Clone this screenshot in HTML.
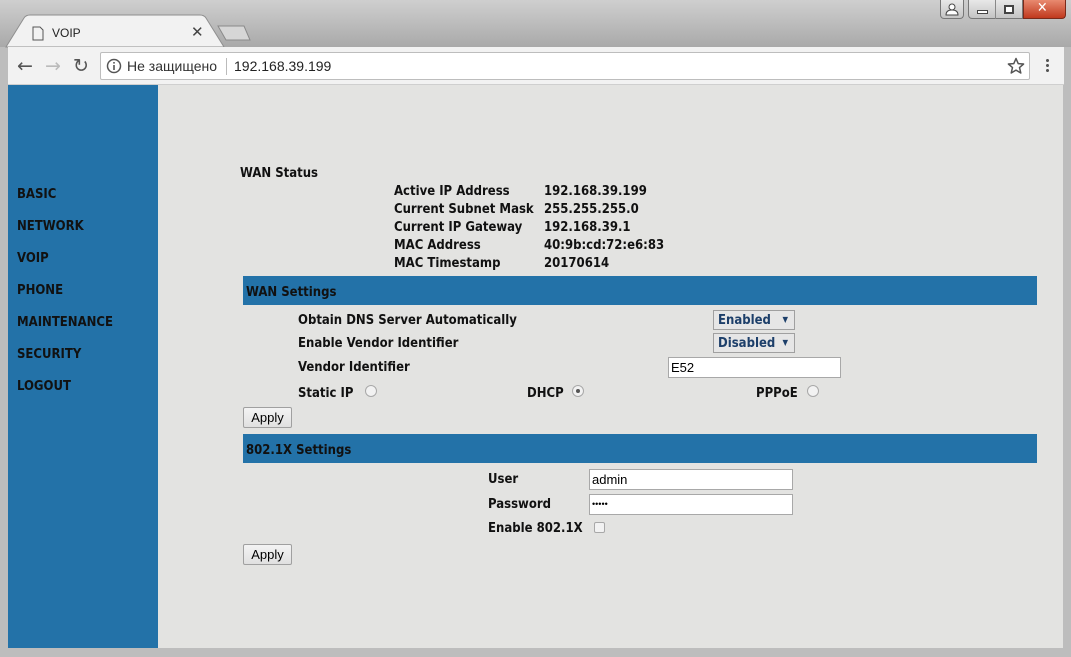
<!DOCTYPE html>
<html><head><meta charset="utf-8"><style>
*{margin:0;padding:0;box-sizing:border-box}
body{width:1071px;height:657px;overflow:hidden;background:#bdbdbd;position:relative;font-family:"DejaVu Sans Condensed","DejaVu Sans","Liberation Sans",sans-serif}
.a{position:absolute}
.b{font-weight:bold;font-size:13px;color:#111;white-space:nowrap}
.nav{position:absolute;left:17px;font-weight:bold;font-size:13px;color:#111}
.bar{position:absolute;left:243px;width:794px;height:29px;background:#2372a8;font-weight:bold;font-size:13px;color:#111;padding:9px 0 0 3px}
.sel{position:absolute;width:82px;height:20px;border:1px solid #a0a0a0;background:#e6e6e6;font-weight:bold;font-size:13px;color:#1d3f6a;padding:2px 0 0 4px}
.sel span{position:absolute;right:6px;top:4px;font-size:8px;color:#1d3f6a}
.inp{position:absolute;height:21px;border:1px solid #a8a8a8;background:#fff;font-family:"Liberation Sans",sans-serif;font-size:13px;color:#000;padding:2px 0 0 2px}
.btn{position:absolute;left:243px;width:49px;height:21px;border:1px solid #a0a0a0;background:linear-gradient(#f4f4f4,#e0e0e0);font-family:"Liberation Sans",sans-serif;font-size:13px;text-align:center;padding-top:2px;border-radius:2px}
.rad{position:absolute;width:12px;height:12px;border:1px solid #a8a8a8;border-radius:50%;background:#f2f2f2}
</style></head><body>
<div class="a" style="left:0;top:0;width:1071px;height:47px;background:linear-gradient(#cfcfcf,#a9a9a9)"></div>
<svg class="a" style="left:0;top:0" width="260" height="48"><path d="M6 47 L24 18 Q26 15 30 15 L200 15 Q204 15 206 18 L224 47 Z" fill="#f2f2f2" stroke="#8f8f8f"/><path d="M218 26 L244 26 L250 40 L226 40 Z" fill="#d6d6d6" stroke="#8a8a8a"/>
<path d="M33 27 h7 l3 3 v10 h-10 z" fill="none" stroke="#555"/></svg>
<div class="a" style="left:52px;top:26px;font-family:'Liberation Sans',sans-serif;font-size:12px;color:#222">VOIP</div>
<div class="a" style="left:191px;top:23px;font-family:'Liberation Sans',sans-serif;font-size:15px;color:#444">✕</div>
<div class="a" style="left:940px;top:0;width:24px;height:19px;border:1px solid #777;border-top:none;border-radius:0 0 4px 4px;background:linear-gradient(#e8e8e8,#c4c4c4)"></div>
<svg class="a" style="left:940px;top:0" width="24" height="19"><circle cx="12" cy="7" r="3" fill="#fff" stroke="#444"/><path d="M6 15 Q6 10 12 10 Q18 10 18 15 Z" fill="#fff" stroke="#444"/></svg>
<div class="a" style="left:968px;top:0;width:55px;height:19px;border:1px solid #777;border-top:none;border-radius:0 0 0 4px;background:linear-gradient(#e8e8e8,#c4c4c4)"></div>
<div class="a" style="left:995px;top:0;width:1px;height:19px;background:#888"></div>
<div class="a" style="left:977px;top:10px;width:11px;height:4px;border:1px solid #444;background:#fff"></div>
<div class="a" style="left:1004px;top:5px;width:10px;height:9px;border:2px solid #444;background:#fff"></div>
<div class="a" style="left:1023px;top:0;width:43px;height:19px;border:1px solid #7a2a1a;border-top:none;border-radius:0 0 4px 0;background:linear-gradient(#e88a70,#c0391e)"></div>
<div class="a" style="left:1037px;top:0px;color:#fff;font-weight:bold;font-size:14px">✕</div>
<div class="a" style="left:8px;top:47px;width:1056px;height:38px;background:#f2f2f2;border-bottom:1px solid #cfcfcf"></div>
<div class="a" style="left:17px;top:55px;font-size:19px;color:#555;font-family:'DejaVu Sans'">←</div>
<div class="a" style="left:45px;top:55px;font-size:19px;color:#bbb;font-family:'DejaVu Sans'">→</div>
<div class="a" style="left:73px;top:55px;font-size:19px;color:#555;font-family:'DejaVu Sans'">↻</div>
<div class="a" style="left:100px;top:52px;width:930px;height:28px;background:#fff;border:1px solid #bdbdbd;border-radius:2px"></div>
<svg class="a" style="left:106px;top:58px" width="16" height="16"><circle cx="8" cy="8" r="6.5" fill="none" stroke="#555" stroke-width="1.5"/><rect x="7.2" y="7" width="1.6" height="5" fill="#555"/><rect x="7.2" y="4" width="1.6" height="1.6" fill="#555"/></svg>
<div class="a" style="left:127px;top:58px;font-family:'Liberation Sans',sans-serif;font-size:14px;color:#333">Не защищено</div>
<div class="a" style="left:226px;top:58px;width:1px;height:17px;background:#bbb"></div>
<div class="a" style="left:234px;top:58px;font-family:'Liberation Sans',sans-serif;font-size:14px;color:#222">192.168.39.199</div>
<svg class="a" style="left:1007px;top:57px" width="18" height="18"><path d="M9 1.5 L11.2 6.6 L16.6 7 L12.5 10.6 L13.8 16 L9 13.1 L4.2 16 L5.5 10.6 L1.4 7 L6.8 6.6 Z" fill="none" stroke="#555" stroke-width="1.5" stroke-linejoin="round"/></svg>
<div class="a" style="left:1046px;top:58px;width:3px;height:15px;background:radial-gradient(circle,#555 1.4px,transparent 1.6px) 0 0/3px 5px"></div>
<div class="a" style="left:8px;top:85px;width:1055px;height:563px;background:#e3e3e1"></div>
<div class="a" style="left:8px;top:85px;width:150px;height:563px;background:#2372a8"></div>
<div class="nav" style="top:187px">BASIC</div>
<div class="nav" style="top:219px">NETWORK</div>
<div class="nav" style="top:251px">VOIP</div>
<div class="nav" style="top:283px">PHONE</div>
<div class="nav" style="top:315px">MAINTENANCE</div>
<div class="nav" style="top:347px">SECURITY</div>
<div class="nav" style="top:379px">LOGOUT</div>

<div class="a b" style="left:240px;top:166px">WAN Status</div>
<div class="a b" style="left:394px;top:183px;line-height:18px">Active IP Address<br>Current Subnet Mask<br>Current IP Gateway<br>MAC Address<br>MAC Timestamp</div>
<div class="a b" style="left:544px;top:183px;line-height:18px">192.168.39.199<br>255.255.255.0<br>192.168.39.1<br>40:9b:cd:72:e6:83<br>20170614</div>

<div class="bar" style="top:276px">WAN Settings</div>
<div class="a b" style="left:298px;top:313px">Obtain DNS Server Automatically</div>
<div class="a b" style="left:298px;top:336px">Enable Vendor Identifier</div>
<div class="a b" style="left:298px;top:360px">Vendor Identifier</div>
<div class="sel" style="left:713px;top:310px">Enabled<span>▼</span></div>
<div class="sel" style="left:713px;top:333px">Disabled<span>▼</span></div>
<div class="inp" style="left:668px;top:357px;width:173px">E52</div>
<div class="a b" style="left:298px;top:386px">Static IP</div>
<div class="rad" style="left:365px;top:385px"></div>
<div class="a b" style="left:527px;top:386px">DHCP</div>
<div class="rad" style="left:572px;top:385px"><div style="width:4px;height:4px;border-radius:50%;background:#555;margin:3px"></div></div>
<div class="a b" style="left:756px;top:386px">PPPoE</div>
<div class="rad" style="left:807px;top:385px"></div>
<div class="btn" style="top:407px">Apply</div>

<div class="bar" style="top:434px">802.1X Settings</div>
<div class="a b" style="left:488px;top:472px">User</div>
<div class="a b" style="left:488px;top:497px">Password</div>
<div class="a b" style="left:488px;top:521px">Enable 802.1X</div>
<div class="inp" style="left:589px;top:469px;width:204px">admin</div>
<div class="inp" style="left:589px;top:494px;width:204px;font-size:9px;padding-top:4px">•••••</div>
<div class="a" style="left:594px;top:522px;width:11px;height:11px;border:1px solid #a8a8a8;border-radius:2px;background:#f2f2f2"></div>
<div class="btn" style="top:544px">Apply</div>
</body></html>
